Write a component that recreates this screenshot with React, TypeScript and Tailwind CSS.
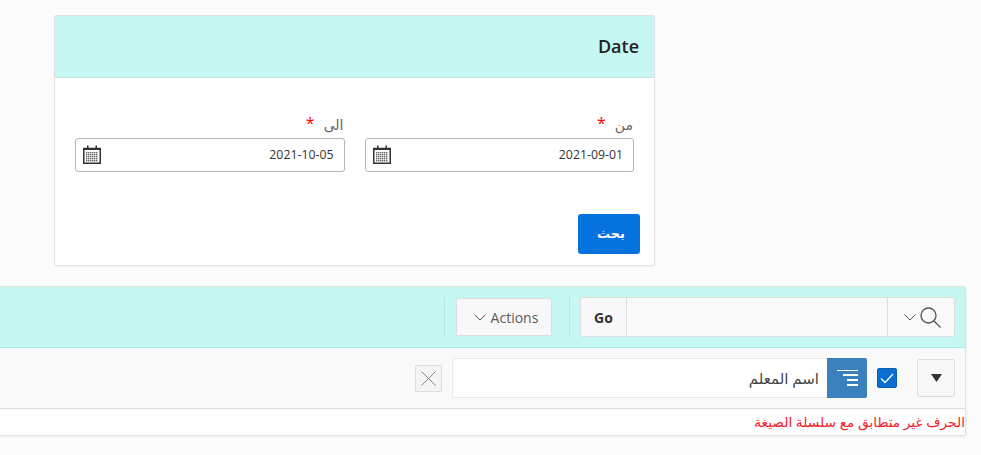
const FONT = "font-['Open_Sans','DejaVu_Sans',sans-serif]";

function CalendarIcon() {
  return (
    <svg width="18" height="19" viewBox="0 0 18 19" className="shrink-0 translate-y-[-1px]">
      <rect x="0.75" y="3.5" width="16.5" height="14.75" fill="#fff" stroke="#333" strokeWidth="1.5" />
      <rect x="1" y="3" width="16" height="2" fill="#333" />
      <rect x="4" y="0.5" width="1.5" height="4" fill="#333" />
      <rect x="12.5" y="0.5" width="1.5" height="4" fill="#333" />
      {[7, 9, 11, 13, 15].map((y) =>
        [3, 5, 7, 9, 11, 13].map((x) => (
          <rect key={`${x}-${y}`} x={x} y={y} width="1.4" height="1.4" fill="#666" />
        )),
      )}
    </svg>
  );
}

function DateField({ label, value }: { label: string; value: string }) {
  return (
    <div>
      <div className="flex h-[24px] items-center justify-end gap-[9px] pr-[1px] pb-[4px] text-[14px] text-[#666]">
        <span className="translate-y-[-1px] text-[16px] leading-none text-[#f00]">*</span>
        <span dir="rtl">{label}</span>
      </div>
      <div className="flex h-[34px] items-center justify-between rounded-[3px] border border-[#b5b5b5] bg-white pl-[7px] pr-[10px]">
        <CalendarIcon />
        <span className="text-[12.3px] text-[#333]">{value}</span>
      </div>
    </div>
  );
}

function Chevron({ className }: { className?: string }) {
  return (
    <svg width="12" height="7" viewBox="0 0 12 7" className={className}>
      <path d="M0.5 0.5 L6 6 L11.5 0.5" fill="none" stroke="#555" strokeWidth="1" />
    </svg>
  );
}

export default function App() {
  return (
    <div className={`${FONT} h-[455px] w-[981px] overflow-hidden bg-[#fcfcfc] pt-[15px]`}>
      <section className="ml-[54px] w-[601px] rounded-[2px] border border-[#e2e2e2] bg-white shadow-[0_1px_2px_rgba(0,0,0,0.05)]">
        <header className="flex h-[62px] items-center justify-end border-b border-[#c3e3e0] bg-[#c6f7f3] pr-[15px]">
          <h2 className="text-[18px] font-semibold text-[#222]">Date</h2>
        </header>
        <div className="grid grid-cols-2 gap-[20px] px-[20px] pt-[36px]">
          <DateField label="الى" value="2021-10-05" />
          <DateField label="من" value="2021-09-01" />
        </div>
        <div className="flex justify-end pr-[14px] pt-[42px] pb-[11px]">
          <button
            type="button"
            className="h-[40px] w-[62px] rounded-[3px] bg-[#0572de] pl-[4px] text-[13px] font-bold text-white"
          >
            بحث
          </button>
        </div>
      </section>

      <section className="mt-[20px] ml-[-1px] w-[967px] rounded-[2px] border border-[#e2e2e2] bg-white shadow-[0_1px_3px_rgba(0,0,0,0.08)]">
        <div className="flex h-[61px] items-center justify-end border-b border-[#a5efe9] bg-[#c6f7f3] pr-[10px]">
          <div className="mr-[11px] h-[40px] w-px bg-[#b8e6e2]" />
          <button
            type="button"
            className="mr-[17px] flex h-[38px] w-[96px] items-center justify-center gap-[5px] rounded-[2px] border border-[#dedede] bg-[#f8f8f8] pl-[4px] text-[14px] text-[#5a5a5a]"
          >
            <Chevron />
            Actions
          </button>
          <div className="mr-[10px] h-[40px] w-px bg-[#b8e6e2]" />
          <div className="flex h-[40px] w-[375px] rounded-[2px] border border-[#dedede] bg-[#f9f9f9]">
            <button
              type="button"
              className="w-[46px] border-r border-[#dedede] bg-[#f8f8f8] text-[14px] font-bold text-[#333]"
            >
              Go
            </button>
            <div className="flex-1" />
            <button
              type="button"
              className="flex w-[67px] items-center justify-center gap-[4px] border-l border-[#dedede] pl-[3px]"
            >
              <Chevron />
              <svg width="21" height="21" viewBox="0 0 21 21">
                <circle cx="8.5" cy="8.5" r="7.5" fill="none" stroke="#555" strokeWidth="1.3" />
                <path d="M14 14 L20.5 20.5" stroke="#555" strokeWidth="1.3" />
              </svg>
            </button>
          </div>
        </div>

        <div className="flex h-[61px] items-center justify-end border-b border-[#dcdcdc] bg-[#f9f9f9] pr-[10px]">
          <button
            type="button"
            className="mr-[10px] flex h-[27px] w-[27px] items-center justify-center rounded-[1px] border border-[#dedede] bg-[#f4f4f4]"
          >
            <svg width="15" height="15" viewBox="0 0 15 15">
              <path d="M0.5 0.5 L14.5 14.5 M14.5 0.5 L0.5 14.5" stroke="#888" strokeWidth="1" />
            </svg>
          </button>
          <div className="flex h-[40px] w-[415px] items-stretch justify-end rounded-[2px] border border-[#e8e8e8] bg-white">
            <span dir="rtl" className="flex items-center pr-[8px] text-[15px] text-[#444]">
              اسم المعلم
            </span>
            <div className="mr-[-1px] my-[-1px] flex w-[40px] flex-col items-end justify-center gap-[3px] rounded-r-[2px] bg-[#3a80bd] pr-[9px]">
              <span className="h-[1px] w-[21px] bg-white" />
              <span className="h-[2px] w-[15px] bg-white" />
              <span className="h-[2px] w-[11px] bg-white" />
              <span className="h-[2px] w-[11px] bg-white" />
            </div>
          </div>
          <div className="ml-[10px] flex h-[20px] w-[20px] items-center justify-center rounded-[2px] border border-[#0a5fb0] bg-[#0b6fcf]">
            <svg width="14" height="11" viewBox="0 0 14 11">
              <path d="M1 5.5 L5 9.5 L13 1" fill="none" stroke="#fff" strokeWidth="1.3" />
            </svg>
          </div>
          <button
            type="button"
            className="ml-[20px] flex h-[38px] w-[38px] items-center justify-center rounded-[2px] border border-[#dedede] bg-[#f8f8f8]"
          >
            <svg width="11" height="8" viewBox="0 0 11 8">
              <path d="M0 0 H11 L5.5 8 Z" fill="#333" />
            </svg>
          </button>
        </div>

        <div className="flex h-[26px] items-center justify-end bg-white">
          <span dir="rtl" className="text-[13.75px] text-[#f0222b]">
            الحرف غير متطابق مع سلسلة الصيغة
          </span>
        </div>
      </section>
    </div>
  );
}
